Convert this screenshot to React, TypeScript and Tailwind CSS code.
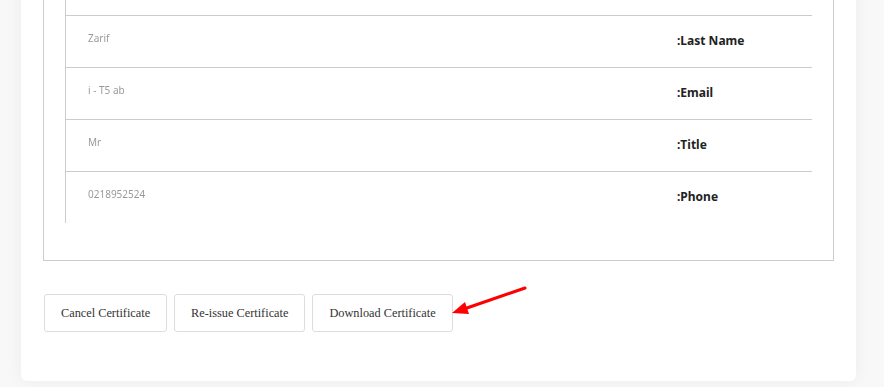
import React from 'react'

interface Row {
  label: string
  value: string
}

// first row sits above the fold, only its bottom edge is visible
const rows: Row[] = [
  { label: '', value: '' },
  { label: ':Last Name', value: 'Zarif' },
  { label: ':Email', value: 'i   -    T5 ab' },
  { label: ':Title', value: 'Mr' },
  { label: ':Phone', value: '0218952524' },
]

function RedArrow(): React.JSX.Element {
  return (
    <svg
      className="absolute left-[446px] top-[283px]"
      width="86"
      height="36"
      viewBox="0 0 86 36"
    >
      <line x1="79" y1="5" x2="18" y2="26" stroke="#ff0000" strokeWidth="3" strokeLinecap="round" />
      <polygon points="6,30 19,19 23,31" fill="#ff0000" />
    </svg>
  )
}

export default function App(): React.JSX.Element {
  return (
    <div className="relative h-[387px] w-[884px] overflow-hidden bg-[#f8f8f8]">
      <div className="ml-[21px] w-[835px] -mt-[60px] rounded-b-[6px] bg-white px-[22px] pb-[49px] shadow-[0_0_18px_rgba(0,0,0,0.05)]">
        <div className="border border-[#cccccc] px-[21px] pt-[22px] pb-[37px]">
          <div className="border-l border-[#cccccc]">
            {rows.map((row, i) => (
              <div
                key={i}
                className={
                  'flex h-[52px] items-center ' +
                  (i > 0 ? 'border-t border-[#cccccc]' : '')
                }
              >
                <div className="flex-1 pl-[22px] pb-[6px] font-['Noto_Sans',sans-serif] text-[10px] text-[#555] opacity-60 blur-[0.4px]">
                  {row.value}
                </div>
                <div className="w-[135px] pb-[2px] font-['Noto_Sans',sans-serif] text-[12px] font-bold text-[#222]">
                  {row.label}
                </div>
              </div>
            ))}
          </div>
        </div>
        <div className="mt-[33px] ml-[1px] flex gap-[7px] font-['Liberation_Serif',serif] text-[12.3px] text-[#333]">
          <button className="h-[38px] rounded-[3px] border border-[#dddddd] bg-white px-[16px]">
            Cancel Certificate
          </button>
          <button className="h-[38px] rounded-[3px] border border-[#dddddd] bg-white px-[16px]">
            Re-issue Certificate
          </button>
          <button className="h-[38px] rounded-[3px] border border-[#dddddd] bg-white px-[16px]">
            Download Certificate
          </button>
        </div>
      </div>
      <RedArrow />
    </div>
  )
}
